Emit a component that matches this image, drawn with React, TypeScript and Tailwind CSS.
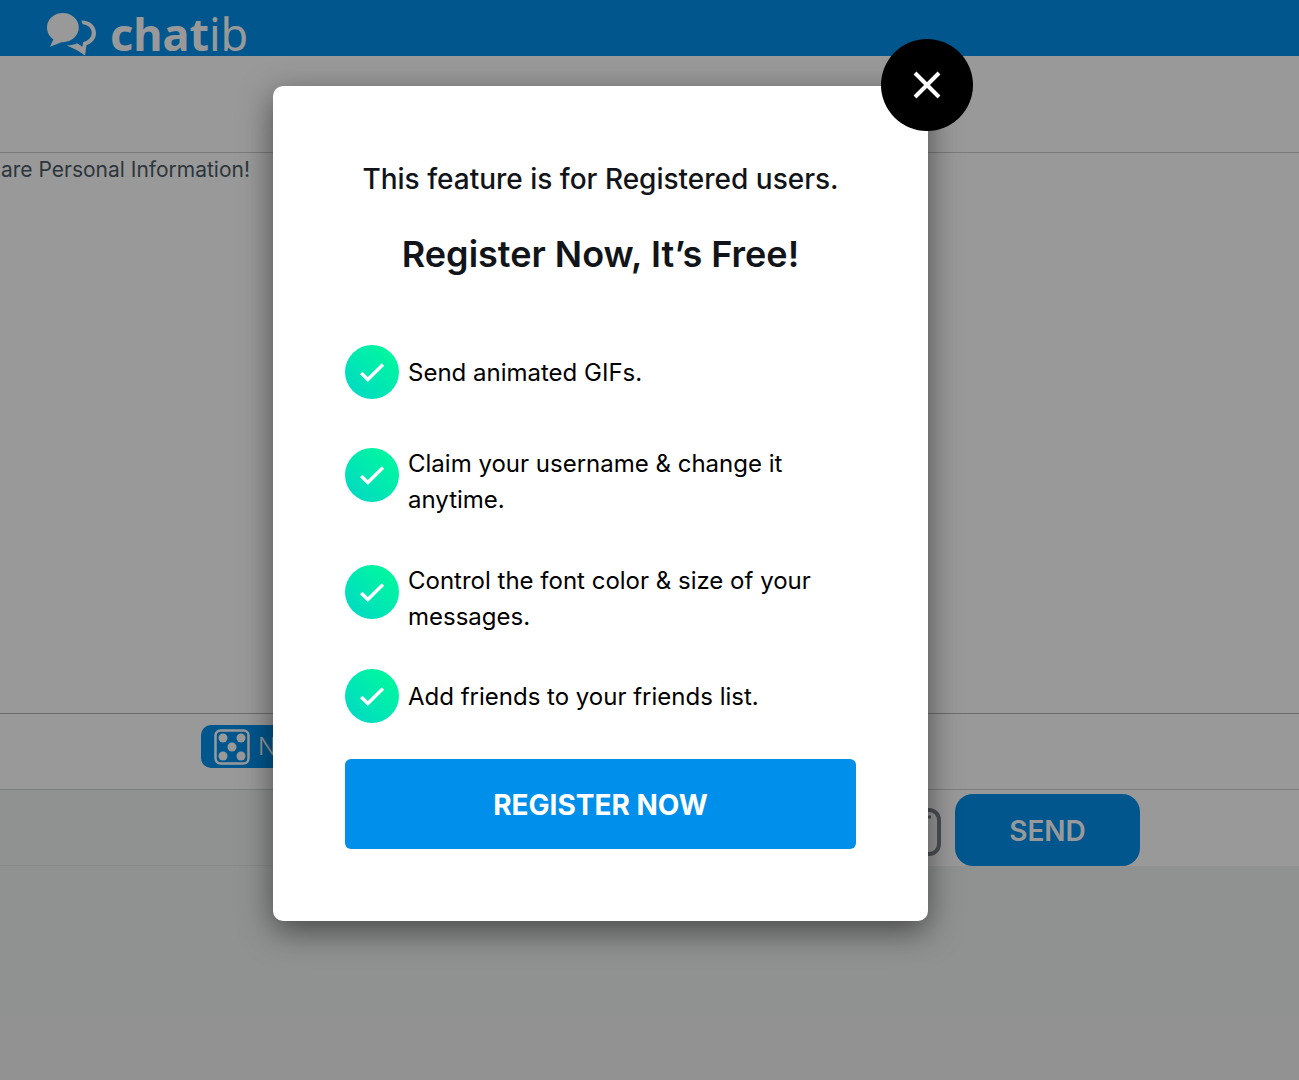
const features = [
  { text: 'Send animated GIFs.', spacing: 'mb-[45px]', icon: '' },
  { text: 'Claim your username & change it anytime.', spacing: 'mb-[45px]', icon: 'mt-0.5' },
  { text: 'Control the font color & size of your messages.', spacing: 'mb-[34px]', icon: 'mt-0.5' },
  { text: 'Add friends to your friends list.', spacing: 'mb-[34px]', icon: '' },
]

function Logo() {
  return (
    <a href="#" className="flex items-center gap-3 text-white">
      <svg width="52" height="44" viewBox="0 0 52 44" fill="currentColor" aria-hidden="true">
        <path d="M16.800 1C8 1 1 7.300 1 15.600c0 5 2.400 9.300 6.400 11.800L4 34.800l11.500-4.600c10 .6 17.300-6.400 17.300-14.600C32.800 7.300 25.600 1 16.800 1z" />
        <path d="M35.500 8.500C44 8.500 50 13.800 50 21c0 5.600-3.400 10-9.500 12.200L39 43.500 31.500 38.500 20.500 33.200c4.500 0 8-.6 10.500-2l5.500 3.600.6-4.600c5.500-1.400 8.600-4.900 8.600-9.400 0-4.600-3.600-8-9.200-8.600z" />
      </svg>
      <span className="font-['Noto_Sans',sans-serif] text-[45px] leading-[44px]">
        <span className="font-bold">chat</span>
        <span className="font-normal">ib</span>
      </span>
    </a>
  )
}

function DiceIcon() {
  return (
    <svg width="36" height="36" viewBox="0 0 36 36" aria-hidden="true">
      <rect x="1.500" y="1.500" width="33" height="33" rx="5" fill="none" stroke="currentColor" strokeWidth="2.500" />
      <g fill="currentColor">
        <circle cx="9" cy="9" r="4.500" />
        <circle cx="27" cy="9" r="4.500" />
        <circle cx="18" cy="18" r="4.500" />
        <circle cx="9" cy="27" r="4.500" />
        <circle cx="27" cy="27" r="4.500" />
      </g>
    </svg>
  )
}

function GifIcon() {
  return (
    <svg width="48" height="48" viewBox="0 0 48 48" fill="none" stroke="currentColor" aria-hidden="true">
      <rect x="2" y="2" width="44" height="44" rx="10" strokeWidth="4" />
      <path d="M38 9H30V36M30 22H34M23 9V36M18 12C8 6 6 34 18 32V22H14" strokeWidth="3" />
    </svg>
  )
}

function CheckIcon({ className }: { className: string }) {
  return (
    <span className={`flex size-[54px] shrink-0 items-center justify-center rounded-full bg-linear-to-bl from-[#00fc96] to-[#00d6c6] text-white ${className}`}>
      <svg width="26" height="20" viewBox="0 0 26 20" fill="none" stroke="currentColor" strokeWidth="3.400" aria-hidden="true">
        <path d="M2.200 11L8.800 17.500L24 2.500" />
      </svg>
    </span>
  )
}

function ChatPage() {
  return (
    <div className="flex min-h-screen flex-col bg-[#f1f4f2]">
      <header className="flex h-14 items-center bg-[#0090ec] pl-[46px] pt-3">
        <Logo />
      </header>
      <div className="h-[97px] border-b border-[#ccc] bg-white" />
      <main className="h-[561px] border-b border-[#b4b4b4] bg-white">
        <div className="flex w-[250px] justify-end overflow-hidden">
          <p className="shrink-0 whitespace-nowrap text-[21px] leading-[34px] text-[#4b5a66]">Share Personal Information!</p>
        </div>
      </main>
      <div className="flex h-[76px] items-start border-b border-[#d2d2d2] bg-white pl-[201px] pt-[11px]">
        <button className="flex h-[43px] items-center gap-2 rounded-[10px] bg-[#0090ec] px-[13px] text-2xl font-light text-white">
          <DiceIcon />
          Next
        </button>
      </div>
      <form className="flex h-[76px] items-end bg-white pr-[159px]" onSubmit={(e) => e.preventDefault()}>
        <input aria-label="Message" className="h-full min-w-0 flex-1 border-b border-[#e1e4e2] bg-[#f1f4f2] px-4 text-2xl outline-none" />
        <button type="button" aria-label="GIF" className="mb-[10px] ml-4 mr-[14px] text-[#7d848c]">
          <GifIcon />
        </button>
        <button className="h-[72px] w-[185px] rounded-[18px] bg-[#0090ec] pt-0.5 text-[28px] font-semibold text-white">SEND</button>
      </form>
    </div>
  )
}

function RegisterModal() {
  return (
    <div className="absolute inset-0 flex items-start justify-center bg-black/40 pr-[98px] pt-[86px]">
      <div role="dialog" aria-modal="true" aria-labelledby="register-title" className="relative w-full max-w-[655px] rounded-[10px] bg-white p-[72px] shadow-[0_10px_32px_rgba(0,0,0,0.5)]">
        <button aria-label="Close" className="absolute -right-[45px] -top-[47px] flex size-[92px] items-center justify-center rounded-full bg-black text-white">
          <svg width="28" height="28" viewBox="0 0 28 28" fill="none" stroke="currentColor" strokeWidth="4" aria-hidden="true">
            <path d="M2 2L26 26M26 2L2 26" />
          </svg>
        </button>
        <div className="text-center text-[#111418]">
          <p className="whitespace-nowrap text-[28px] font-medium leading-[42px]">This feature is for Registered users.</p>
          <h2 id="register-title" className="mt-[30px] text-4xl font-semibold leading-[48px]">Register Now, It’s Free!</h2>
        </div>
        <ul className="mt-[67px] text-black">
          {features.map((feature) => (
            <li key={feature.text} className={`flex items-start gap-[9px] ${feature.spacing}`}>
              <CheckIcon className={feature.icon} />
              <span className="flex min-h-14 items-center text-2xl leading-9">{feature.text}</span>
            </li>
          ))}
        </ul>
        <button className="h-[90px] w-full rounded-md bg-[#0090ec] pt-0.5 text-[28px] font-bold text-white">REGISTER NOW</button>
      </div>
    </div>
  )
}

export default function App() {
  return (
    <div className="relative min-h-screen overflow-hidden font-[Inter,sans-serif]">
      <ChatPage />
      <RegisterModal />
    </div>
  )
}
